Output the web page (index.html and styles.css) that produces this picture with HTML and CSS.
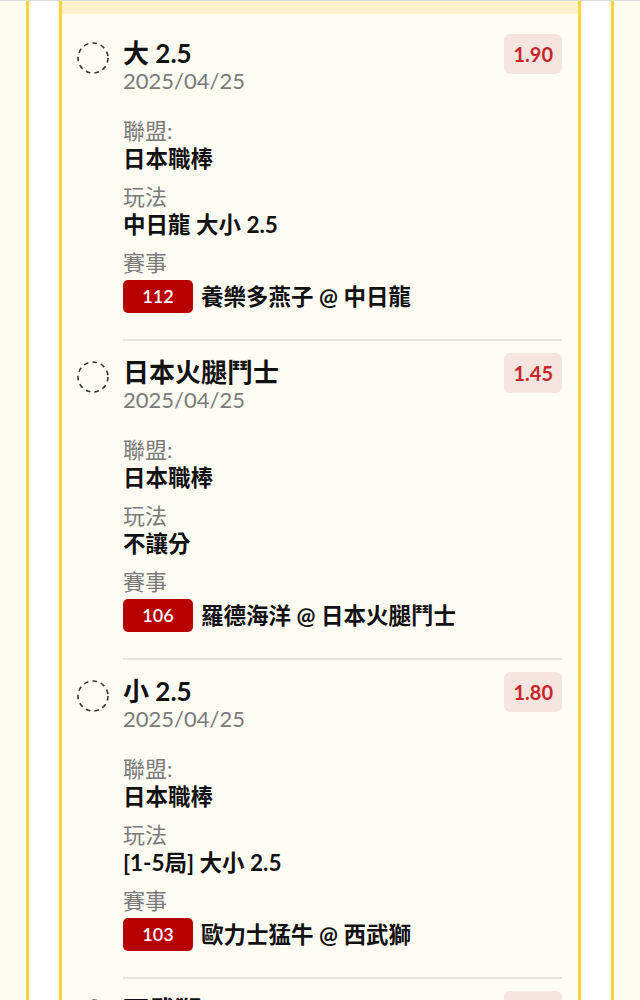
FILE: index.html
```html
<!DOCTYPE html>
<html lang="zh-Hant">
<head>
  <meta charset="UTF-8">
  <title>投注單</title>
  <meta name="viewport" content="width=device-width, initial-scale=1.0">
  <link rel="stylesheet" href="styles.css">
</head>
<body>
  <div class="topline"></div>
  <div class="shell">
    <div class="card">
      <div class="card-head"></div>

      <ul class="bet-list">
        <li class="bet">
          <svg class="check" viewBox="0 0 32 32"><circle cx="16" cy="16" r="15" /></svg>
          <div class="bet-body">
            <div class="bet-head">
              <div>
                <div class="title">大 2.5</div>
                <div class="date">2025/04/25</div>
              </div>
              <span class="odds">1.90</span>
            </div>
            <div class="fields">
              <div class="field">
                <div class="label">聯盟:</div>
                <div class="value">日本職棒</div>
              </div>
              <div class="field">
                <div class="label">玩法</div>
                <div class="value">中日龍 大小 2.5</div>
              </div>
              <div class="field">
                <div class="label">賽事</div>
                <div class="game">
                  <span class="game-no">112</span>
                  <span class="value">養樂多燕子 @ 中日龍</span>
                </div>
              </div>
            </div>
          </div>
        </li>

        <li class="bet">
          <svg class="check" viewBox="0 0 32 32"><circle cx="16" cy="16" r="15" /></svg>
          <div class="bet-body">
            <div class="bet-head">
              <div>
                <div class="title">日本火腿鬥士</div>
                <div class="date">2025/04/25</div>
              </div>
              <span class="odds">1.45</span>
            </div>
            <div class="fields">
              <div class="field">
                <div class="label">聯盟:</div>
                <div class="value">日本職棒</div>
              </div>
              <div class="field">
                <div class="label">玩法</div>
                <div class="value">不讓分</div>
              </div>
              <div class="field">
                <div class="label">賽事</div>
                <div class="game">
                  <span class="game-no">106</span>
                  <span class="value">羅德海洋 @ 日本火腿鬥士</span>
                </div>
              </div>
            </div>
          </div>
        </li>

        <li class="bet">
          <svg class="check" viewBox="0 0 32 32"><circle cx="16" cy="16" r="15" /></svg>
          <div class="bet-body">
            <div class="bet-head">
              <div>
                <div class="title">小 2.5</div>
                <div class="date">2025/04/25</div>
              </div>
              <span class="odds">1.80</span>
            </div>
            <div class="fields">
              <div class="field">
                <div class="label">聯盟:</div>
                <div class="value">日本職棒</div>
              </div>
              <div class="field">
                <div class="label">玩法</div>
                <div class="value">[1-5局] 大小 2.5</div>
              </div>
              <div class="field">
                <div class="label">賽事</div>
                <div class="game">
                  <span class="game-no">103</span>
                  <span class="value">歐力士猛牛 @ 西武獅</span>
                </div>
              </div>
            </div>
          </div>
        </li>

        <li class="bet">
          <svg class="check" viewBox="0 0 32 32"><circle cx="16" cy="16" r="15" /></svg>
          <div class="bet-body">
            <div class="bet-head">
              <div>
                <div class="title">西武獅</div>
                <div class="date">2025/04/25</div>
              </div>
              <span class="odds">2.05</span>
            </div>
          </div>
        </li>
      </ul>
    </div>
  </div>
</body>
</html>
```

FILE: styles.css
```css
body {
  margin: 0;
  background: #fefbf0;
  font-family: 'Lato', 'Noto Sans CJK TC', sans-serif;
  color: #111;
  height: 1000px;
  overflow: hidden;
}

.topline {
  height: 1px;
  background: #dcdcdc;
}

.shell {
  margin: 0 26px;
  background: #ffffff;
  border-left: 3px solid #f9d43c;
  border-right: 3px solid #f9d43c;
  padding: 0 30px;
}

.card {
  background: #fffcf4;
  border-left: 3px solid #f9d43c;
  border-right: 3px solid #f9d43c;
  min-height: 1000px;
}

.card-head {
  height: 13px;
  background: #fdf2c9;
}

.bet-list {
  list-style: none;
  margin: 0;
  padding: 8px 0 0;
}

.bet {
  display: flex;
  gap: 14px;
  padding: 12px 16px 0 15px;
}

.check {
  flex: none;
  width: 32px;
  height: 32px;
  margin-top: 8px;
}

.check circle {
  fill: none;
  stroke: #333;
  stroke-width: 1.6;
  stroke-dasharray: 4.6 4.1;
}

.bet-body {
  flex: 1;
  border-bottom: 2px solid #e8e5de;
  padding-bottom: 26px;
}

.bet-head {
  display: flex;
  justify-content: space-between;
  align-items: flex-start;
}

.title {
  font-size: 26px;
  line-height: 28px;
  font-weight: 700;
  margin-top: 5px;
}

.date {
  font-size: 22px;
  line-height: 26px;
  margin-top: 1px;
  color: #7a7a7a;
}

.odds {
  background: #f6e5df;
  color: #c4262c;
  font-size: 20px;
  font-weight: 700;
  line-height: 40px;
  padding: 0 9px;
  border-radius: 6px;
}

.fields {
  margin-top: 23px;
}

.field + .field {
  margin-top: 10px;
}

.label {
  font-size: 22px;
  line-height: 28px;
  color: #7a7a7a;
}

.value {
  font-size: 22.5px;
  line-height: 28px;
  font-weight: 700;
}

.game {
  display: flex;
  align-items: center;
  gap: 8px;
  margin-top: 3px;
}

.game-no {
  width: 70px;
  height: 33px;
  line-height: 33px;
  text-align: center;
  background: #b70000;
  color: #fff;
  font-size: 18px;
  font-weight: 600;
  border-radius: 5px;
}
```
